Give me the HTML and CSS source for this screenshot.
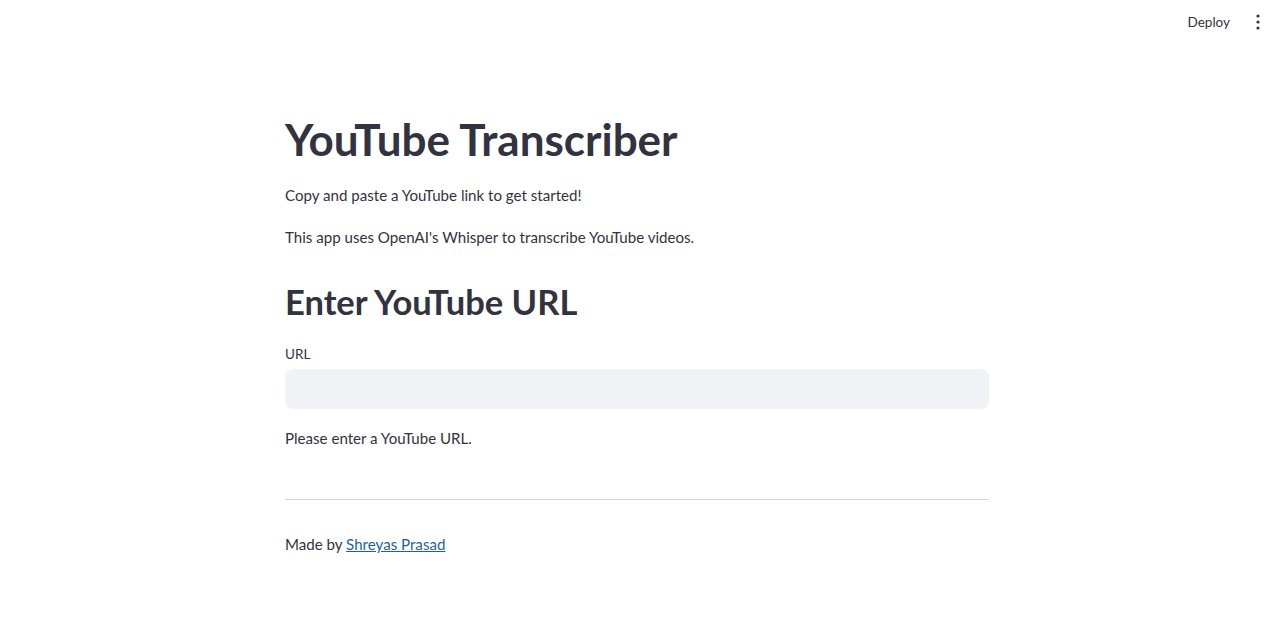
FILE: index.html
```html
<!DOCTYPE html>
<html lang="en">
<head>
  <meta charset="UTF-8" />
  <title>YouTube Transcriber</title>
  <link rel="stylesheet" href="styles.css">
</head>
<body>
  <header class="topbar">
    <button class="deploy">Deploy</button>
    <button class="menu" aria-label="Main menu">
      <svg width="16" height="18" viewBox="0 0 16 18"><circle cx="8" cy="3" r="1.6"/><circle cx="8" cy="9" r="1.6"/><circle cx="8" cy="15" r="1.6"/></svg>
    </button>
  </header>

  <main class="main">
    <h1>YouTube Transcriber</h1>
    <p>Copy and paste a YouTube link to get started!</p>
    <p>This app uses OpenAI's Whisper to transcribe YouTube videos.</p>

    <h2>Enter YouTube URL</h2>
    <label class="field">
      <span class="field-label">URL</span>
      <input type="text" class="field-input">
    </label>
    <p class="info">Please enter a YouTube URL.</p>

    <hr>
    <p class="footer">Made by <a href="#">Shreyas Prasad</a></p>
  </main>
</body>
</html>
```

FILE: styles.css
```css
body {
  margin: 0;
  font-family: Lato, "Open Sans", sans-serif;
  color: #31333f;
  background: #fff;
}
.topbar {
  height: 44px;
  display: flex;
  justify-content: flex-end;
  align-items: center;
  padding-right: 14px;
}
.deploy {
  background: none;
  border: none;
  font: inherit;
  font-size: 13.5px;
  color: #31333f;
  padding: 0 8px;
  margin-right: 12px;
}
.menu {
  background: none;
  border: none;
  padding: 0;
  display: flex;
  fill: #31333f;
}
.main {
  width: 704px;
  margin-left: calc(50% - 355px);
  padding-top: 63px;
}
h1 {
  font-size: 44px;
  font-weight: 700;
  margin: 0 0 11px;
  line-height: 64px;
}
p {
  font-size: 15.1px;
  margin: 0 0 16px;
  line-height: 26px;
}
h2 {
  font-size: 34.5px;
  font-weight: 700;
  margin: 25px 0 15px;
  line-height: 54px;
}
.field {
  display: block;
}
.field-label {
  display: block;
  font-size: 13.5px;
  line-height: 20px;
  margin-bottom: 5px;
}
.field-input {
  display: block;
  width: 100%;
  box-sizing: border-box;
  height: 40px;
  border: none;
  border-radius: 8px;
  background: #f0f2f6;
}
.info {
  margin-top: 16px;
}
hr {
  border: none;
  border-top: 1px solid #d6d6d9;
  margin: 48px 0 31px;
}
.footer a {
  color: #1c5fa8;
}
```
